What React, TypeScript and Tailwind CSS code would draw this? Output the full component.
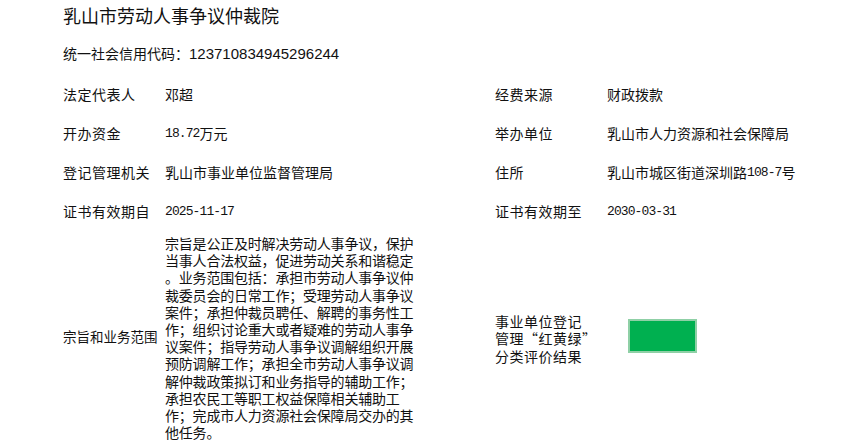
const CJK = "font-['Noto_Sans_CJK_SC','Noto_Sans',sans-serif]"

const SCOPE_LINES = [
  '宗旨是公正及时解决劳动人事争议，保护',
  '当事人合法权益，促进劳动关系和谐稳定',
  '。业务范围包括：承担市劳动人事争议仲',
  '裁委员会的日常工作；受理劳动人事争议',
  '案件；承担仲裁员聘任、解聘的事务性工',
  '作；组织讨论重大或者疑难的劳动人事争',
  '议案件；指导劳动人事争议调解组织开展',
  '预防调解工作；承担全市劳动人事争议调',
  '解仲裁政策拟订和业务指导的辅助工作；',
  '承担农民工等职工权益保障相关辅助工',
  '作；完成市人力资源社会保障局交办的其',
  '他任务。',
]

function Mono({ children }: { children: string }) {
  return <span className="font-['Liberation_Mono',monospace] text-[13px] tracking-[-0.9px]">{children}</span>
}

function Label({ children }: { children: React.ReactNode }) {
  return <div className="flex items-center h-[39px] tracking-[0.5px]">{children}</div>
}

function Value({ children }: { children: React.ReactNode }) {
  return <div className="flex items-center h-[39px]">{children}</div>
}

export default function App() {
  return (
    <div className={`${CJK} bg-white text-[#111] text-[14px] leading-[19px] w-[862px] h-[445px] overflow-hidden pl-[63px]`}>
      <h1 className="text-[18px] leading-[24px] pt-[3px] font-normal">乳山市劳动人事争议仲裁院</h1>

      <div className="mt-[16px] text-[14px] leading-[20px]">
        统一社会信用代码：<span className="font-['Liberation_Sans',sans-serif] text-[15px]">123710834945296244</span>
      </div>

      <div className="mt-[11px] grid grid-cols-[102px_330px_112px_1fr]">
        <Label>法定代表人</Label>
        <Value>邓超</Value>
        <Label>经费来源</Label>
        <Value>财政拨款</Value>

        <Label>开办资金</Label>
        <Value><Mono>18.72</Mono>万元</Value>
        <Label>举办单位</Label>
        <Value>乳山市人力资源和社会保障局</Value>

        <Label>登记管理机关</Label>
        <Value>乳山市事业单位监督管理局</Value>
        <Label>住所</Label>
        <Value>乳山市城区街道深圳路<Mono>108-7</Mono>号</Value>

        <Label>证书有效期自</Label>
        <Value><Mono>2025-11-17</Mono></Value>
        <Label>证书有效期至</Label>
        <Value><Mono>2030-03-31</Mono></Value>

        <div className="flex items-center text-[13.5px] whitespace-nowrap">宗旨和业务范围</div>
        <div className="pt-[4px] text-[14px] leading-[17.2px] tracking-[-0.2px]">
          {SCOPE_LINES.map((l, i) => (
            <div key={i} className="whitespace-nowrap">{l}</div>
          ))}
        </div>
        <div className="flex items-center pt-[6px] leading-[17.5px] tracking-[0.5px]">
          <div>
            事业单位登记<br />
            管理“红黄绿”<br />
            分类评价结果
          </div>
        </div>
        <div className="flex items-center pl-[21px]">
          <div className="w-[69px] h-[34px] bg-[#00b050] border-2 border-[#8fd0a6]" />
        </div>
      </div>
    </div>
  )
}
